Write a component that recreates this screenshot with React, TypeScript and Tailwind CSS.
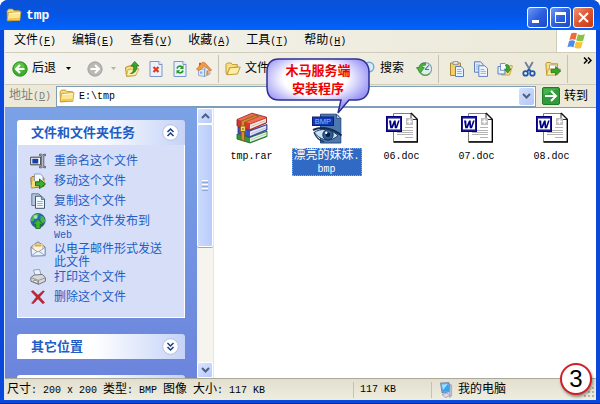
import type { ReactNode } from "react"

const cjk = "font-['Liberation_Sans','Noto_Sans_CJK_SC',sans-serif]"
const mono = "font-['Liberation_Mono','Noto_Sans_CJK_SC',monospace]"

/* Latin runs are set in a half-width mono face next to the full-width glyphs */
function Mixed({ children }: { children: string }) {
  const runs = children.split(/([\x20-\x7e]+)/).filter(Boolean)
  return (
    <>
      {runs.map((run, i) =>
        /^[\x20-\x7e]/.test(run) ? (
          <span key={i} className={`text-[10px] whitespace-pre-wrap ${mono}`}>
            {run}
          </span>
        ) : (
          run
        )
      )}
    </>
  )
}

function Icon({ size = 16, box = 16, children }: { size?: number; box?: number; children: ReactNode }) {
  return (
    <svg width={size} height={size} viewBox={`0 0 ${box} ${box}`} className="block shrink-0" aria-hidden="true">
      {children}
    </svg>
  )
}

const FolderIcon = () => (
  <Icon>
    <path d="M1 4 2.5 2h4L8 3.6h5.5V13l-12 1z" fill="#f7dc7c" stroke="#b98a1c" strokeWidth=".8" />
    <path d="M1.2 13.6 2.4 5.6 15 4.6 13.8 13.4z" fill="#fbe793" stroke="#c79a2c" strokeWidth=".8" />
    <path d="M3.2 6.6 13.8 5.8" stroke="#fffbe0" />
    <path d="M2.4 12.2 13.4 11.8" stroke="#f0bf3e" strokeWidth="1.6" />
  </Icon>
)

const OpenFolderIcon = () => (
  <Icon>
    <path d="M1 3.5 2.2 2h4l1.2 1.6h5V6L4.5 7 2 13.5 1 12z" fill="#f9df80" stroke="#c49a35" />
    <path d="M2 13.8 4.8 6.8 15.2 6 12.4 13z" fill="#fdeea5" stroke="#c49a35" />
  </Icon>
)

const BackIcon = () => (
  <Icon>
    <circle cx="8" cy="8" r="7.5" fill="#3fae2e" />
    <circle cx="7" cy="6" r="5.2" fill="#6fce58" opacity=".6" />
    <circle cx="8" cy="8" r="7.1" fill="none" stroke="#2f8f26" strokeWidth=".9" />
    <path d="M12.5 8H4.5M8 4 4 8l4 4" fill="none" stroke="#fff" strokeWidth="2" />
  </Icon>
)

const ForwardIcon = () => (
  <Icon>
    <circle cx="8" cy="8" r="7.5" fill="#b9b9b5" />
    <circle cx="8" cy="8" r="7" fill="none" stroke="#a5a5a0" />
    <path d="M3.5 8h8M8 4l4 4-4 4" fill="none" stroke="#fff" strokeWidth="2" />
  </Icon>
)

const UpIcon = () => (
  <Icon>
    <path d="M1.5 6.5 5 5l7 .5 2 2-2.5 7-9 .8z" fill="#f8de82" stroke="#b98f2b" />
    <path d="M4 8.5 15 8l-3.5 6.5-9 .5z" fill="#fdf0ad" stroke="#c79f3a" strokeWidth=".7" />
    <path d="M6.5 12.5C9.5 11.5 10 8.5 9.5 5H6.8L10.7.4 15 5h-2.5c.6 4-1.5 7.5-6 7.5z" fill="#35a62a" stroke="#1a701c" strokeWidth=".7" />
  </Icon>
)

const PageBase = () => (
  <>
    <path d="M2 .5h9l3 3v12H2z" fill="#eaf1fc" stroke="#7c95c4" />
    <path d="M11 .5v3h3" fill="#fff" stroke="#7c95c4" />
  </>
)

const StopIcon = () => (
  <Icon>
    <PageBase />
    <path d="m5.5 6 5 5m0-5-5 5" stroke="#e03a20" strokeWidth="2.2" />
  </Icon>
)

const RefreshIcon = () => (
  <Icon>
    <PageBase />
    <path d="M5 7.5C5.5 5 8.5 4.5 10 6.2M11 9.5c-.5 2.6-3.8 3-5.2 1.2" fill="none" stroke="#239a26" strokeWidth="1.7" />
    <path d="M11.5 4v4H7.8zM4.5 13V9.3h3.7z" fill="#239a26" />
  </Icon>
)

const HomeIcon = () => (
  <Icon>
    <path d="M2.5 8.5v6l6 1V8zM8.5 15.5l5.5-2.5V8L9 6z" fill="#dceafd" stroke="#7f9ac8" strokeWidth=".8" />
    <path d="M3 1.8h2v3L3 6z" fill="#c45b2b" />
    <path d="M.4 8.2 6.8 1 9.2 2l6.4 7.2-2 .4L9.2 4.8 3 9.6z" fill="#f59a3f" stroke="#c9702a" strokeWidth=".7" />
    <path d="M10.4 9.8 12.6 9v4.4l-2.2 1z" fill="#d08a42" />
    <path d="M4 10.4h2.4v2.4H4z" fill="#7fb4ee" />
  </Icon>
)

const SearchIcon = () => (
  <Icon>
    <path d="m2 14 5-5" stroke="#9a7c3c" strokeWidth="2.4" />
    <circle cx="9" cy="6" r="4.8" fill="#d3ecfb" stroke="#7aa5cf" strokeWidth="1.4" />
  </Icon>
)

const HistoryIcon = () => (
  <Icon>
    <circle cx="9.2" cy="8" r="6.4" fill="#dceef0" stroke="#8aa5ad" strokeWidth="1.2" />
    <path d="m9 8.5 3.8-4.2M9 8.5h4" stroke="#56707c" strokeWidth="1.1" />
    <path d="M9.5 2.2C6 1.5 3.6 3.6 3 6.6H.4L4.4 12l4-5.4H6c.4-1.8 1.8-2.6 3.5-2.4z" fill="#4cb53a" stroke="#25801f" strokeWidth=".7" />
    <path d="M5 12.2c2 2.6 6 2.8 8.4.6" fill="none" stroke="#5aa04c" strokeWidth="1.2" />
  </Icon>
)

const PasteIcon = () => (
  <Icon>
    <path d="M1.5 2h10v12.5h-10z" fill="#f3d168" stroke="#a98632" />
    <path d="M4 .6h5v3H4z" fill="#dfe4ec" stroke="#82868f" strokeWidth=".8" />
    <path d="M6.5 5.5H12l2.5 2.3v7.7h-8z" fill="#eaf2ff" stroke="#5d7fbc" />
    <path d="M8.2 8.5h4M8.2 10.5h4.6M8.2 12.5h4.6" stroke="#86a8de" strokeWidth=".9" />
  </Icon>
)

const CopyIcon = () => (
  <Icon>
    <path d="M1.5.8h6l2.5 2.4v8H1.5z" fill="#dce9fd" stroke="#5d7fbc" />
    <path d="M3 4h4M3 6h4M3 8h4" stroke="#86a8de" strokeWidth=".8" />
    <path d="M5.8 4.8h6l2.7 2.6v8H5.8z" fill="#f2f7ff" stroke="#5d7fbc" />
    <path d="M7.5 8.4h4M7.5 10.4h5.4M7.5 12.4h5.4" stroke="#86a8de" strokeWidth=".9" />
  </Icon>
)

const MoveIcon = () => (
  <Icon>
    <path d="M5 8h3l6-3.8 1.5.8-3 9L4.5 14z" fill="#fbe089" stroke="#bf9637" strokeWidth=".8" />
    <path d="M1 5.5h5L8 7.4V13H1z" fill="#e9f2ff" stroke="#5d7fbc" />
    <path d="M3.5 2.5H8l1.8 1.8v5h-6.3z" fill="#f5f9ff" stroke="#5d7fbc" strokeWidth=".8" />
    <path d="M9.5 3.5c2.4.3 3.4 1.8 3 4.4h1.5L10.7 12 7.4 8h2c.3-1.8 0-2.8-1.2-3.4z" fill="#3aa82c" stroke="#1c7419" strokeWidth=".6" />
  </Icon>
)

const CutIcon = () => (
  <Icon>
    <path d="m4.2 1 5.4 9.2M11.8 1 6.4 10.2" stroke="#6c7f9c" strokeWidth="1.8" />
    <circle cx="4.6" cy="12.4" r="2.3" fill="none" stroke="#1e55ae" strokeWidth="1.7" />
    <circle cx="11.4" cy="12.4" r="2.3" fill="none" stroke="#1e55ae" strokeWidth="1.7" />
    <path d="m6.3 10.5 1.7-2 1.7 2" fill="none" stroke="#1e55ae" strokeWidth="1.4" />
  </Icon>
)

const SendIcon = () => (
  <Icon>
    <path d="M.8 2.5 2 1.5h3.5l1 1.3h6V12l-10.7 2z" fill="#f8dd7f" stroke="#bf9637" />
    <path d="M4.5 4h6l1.5 1.5V12H4.5z" fill="#fff" stroke="#8c9ec4" strokeWidth=".8" />
    <path d="M1.5 14.2 3.5 8h12l-3 6z" fill="#fdeda4" stroke="#bf9637" strokeWidth=".8" />
    <path d="M6 8.2h4.5V5.6L15.8 10l-5.3 4.3v-2.6H6z" fill="#35a62a" stroke="#1a701c" strokeWidth=".7" />
  </Icon>
)

const GoIcon = () => (
  <Icon size={18} box={18}>
    <rect x=".5" y=".5" width="17" height="17" rx="1.5" fill="#2f9b3a" stroke="#1f7a2a" />
    <path d="M1.5 8V1.5h15z" fill="#5cc05f" opacity=".6" />
    <path d="M3 9h10.5M9 4l5 5-5 5" fill="none" stroke="#fff" strokeWidth="2" />
  </Icon>
)

const RenameIcon = () => (
  <Icon>
    <path d="M.7 4.2h10v7.6H.7z" fill="#fff" stroke="#3a3a3a" />
    <path d="M2.3 5.8h6v4.6h-6z" fill="#1440a8" />
    <path d="M9.5 1.2h2l1.2.9L14 1.2h1.6v1.5h-1.8v10.6h1.8v1.5H14l-1.3-.8-1.2.8h-2v-1.5h1.8V2.7H9.5z" fill="#b8bcc8" stroke="#4b4f5c" strokeWidth=".8" />
  </Icon>
)

const MoveFileIcon = () => (
  <Icon>
    <path d="M.8 5 2 3.6h3.5L7 5h7v8.5L1.5 15z" fill="#e9c25c" stroke="#8e6d25" strokeWidth=".9" />
    <path d="M4.5 1h5.8L13 3.4V10H4.5z" fill="#f4f8ff" stroke="#7c8db0" strokeWidth=".8" />
    <path d="M1.2 14.5 2.6 8l12-.4L13 13.6z" fill="#f9dd7b" />
    <path d="M5.5 8.8h4V6l6 5-6 4.6v-2.8h-4z" fill="#3aae2e" stroke="#155f16" strokeWidth=".9" />
  </Icon>
)

const CopyFileIcon = () => (
  <Icon>
    <path d="M1.8.8h7L11 3v9.5H1.8z" fill="#b7c8de" stroke="#5c6f87" strokeWidth=".9" />
    <path d="M5.5 3.2h6l3 3V15.3h-9z" fill="#f3f9ff" stroke="#41566f" />
    <path d="M11.4 3.4v3h3" fill="#8cc1e8" stroke="#41566f" strokeWidth=".8" />
    <path d="M7.2 8.5h5.5M7.2 10.5h5.5M7.2 12.5h5.5" stroke="#7fb2dc" />
  </Icon>
)

const PublishIcon = () => (
  <Icon>
    <circle cx="8" cy="7.6" r="7.2" fill="#2467c7" stroke="#274a7c" strokeWidth=".7" />
    <path d="M3 2.6C5 1 7.5.7 9 1.4L7 4.5 4.5 5.2 3.5 8 1 8.4C.8 6 1.5 4 3 2.6zM10.5 3 13 3.5c1.6 1.6 2 3.5 2 5l-2.5 2-2-3z" fill="#46b93f" />
    <circle cx="5.6" cy="4" r="2" fill="#d9f7d2" opacity=".7" />
    <path d="M8 6.3 13 11.3h-2.8v4.2H5.8v-4.2H3z" fill="#3fb42d" stroke="#17691a" strokeWidth=".8" />
  </Icon>
)

const MailIcon = () => (
  <Icon>
    <path d="M1 6 8 .8 15 6v8.6L1.5 15z" fill="#d5e3f5" stroke="#6a7c98" />
    <path d="M3 3.4 12.8 3v6L8 11 3 8z" fill="#fdf3d8" stroke="#c5a266" strokeWidth=".6" />
    <path d="M4.5 4.6h7" stroke="#f0a63a" strokeWidth="1.6" />
    <path d="M1.2 6.4 7 10.6h2L15 6.4v8.2l-13.5.3z" fill="#eaf3ff" stroke="#7f93b4" strokeWidth=".8" />
    <path d="m1.5 14.6 5.6-4M14.8 14.4l-5.6-3.8" stroke="#7f93b4" strokeWidth=".8" />
  </Icon>
)

const PrintIcon = () => (
  <Icon>
    <path d="m3.5 1 6-.6 1.8 6.2-6 1z" fill="#e8f2ff" stroke="#7d8fab" strokeWidth=".8" />
    <path d="M.8 8.5 4.4 6l8-.6 3 3.4v3.4L8.6 15.4.8 12.2z" fill="#d7d8d8" stroke="#686a6e" strokeWidth=".9" />
    <path d="m1 8.7 7.5 2.7 6.6-2.5M8.5 11.4v3.8" fill="none" stroke="#8b8d92" strokeWidth=".9" />
    <path d="m4 10.9 4 1.6v2l-4.4-1.6z" fill="#fff" stroke="#6c6e73" strokeWidth=".7" />
  </Icon>
)

const DeleteIcon = () => (
  <Icon>
    <path d="M1.2 2.5 3 1.5l5 4.8L13 1.8l1.4.6L9.6 8l5 5.6-1.8 1.2L8 9.8l-4.6 4.8-1.8-.4L6.4 8z" fill="#c3232f" stroke="#8f1a2c" strokeWidth=".5" />
  </Icon>
)

const ComputerIcon = () => (
  <Icon>
    <path d="M2.5 1 11 .6l1.6 9L4 11z" fill="#8fa4cf" stroke="#5d72a2" strokeWidth=".7" />
    <path d="m3.6 2.2 6.6-.4 1.2 7-6.7 1z" fill="#35a3f0" />
    <path d="m3.8 2.5 6-.4L5 8z" fill="#a6e0ff" />
    <path d="M12 2.4 13.6 3v11l-2 1.4z" fill="#c4cadd" stroke="#7d86a4" strokeWidth=".5" />
    <path d="m4 12.5 5-1.4 3.4 2.4-5 2.2z" fill="#d6daea" stroke="#7d86a4" strokeWidth=".6" />
  </Icon>
)

const RarIcon = () => (
  <Icon size={32} box={32}>
    <path d="m1 22 13 3.5L31 19v5.5L14 31 1 27z" fill="#2c9b35" stroke="#17601f" strokeWidth=".8" />
    <path d="m14 26 16.5-6v3.8L14 30z" fill="#e9f3e4" />
    <path d="M15 27.6 30 22" stroke="#a8b8a4" strokeWidth=".7" />
    <path d="m2 15 12 3.5 17-6V18l-17 7-12-3.5z" fill="#4053c6" stroke="#252f80" strokeWidth=".8" />
    <path d="m14 19.4 16.2-5.8v3.7L14 24z" fill="#e7e9f7" />
    <path d="M15 21.6 29.8 16" stroke="#a5abc9" strokeWidth=".7" />
    <path d="m1 7.5 15-6.3 14.5 4V11L14 18 1 14z" fill="#d4372b" stroke="#842018" strokeWidth=".8" />
    <path d="M1.5 7.6 16 1.8l14 3.7-16 6z" fill="#ee6d57" />
    <path d="M14 12.4 30 6.4v3.8L14 17z" fill="#f8ebe6" />
    <path d="m15 14.4 14.6-5.7" stroke="#c5a8a3" strokeWidth=".7" />
    <path d="m5.2 9 14-5.6 3.4 1L8.5 10.3v18.6l-3.3-1z" fill="#d78d2c" stroke="#855215" strokeWidth=".7" />
    <path d="M4.4 14h5v5.5h-5z" fill="#f7dd60" stroke="#8a5e17" />
    <path d="M6.2 16h1.4v2H6.2z" fill="#9c6c1e" />
  </Icon>
)

const BmpIcon = () => (
  <Icon size={32} box={32}>
    <path d="M9.5 2.2h16l4.3 4.3V31H9.5z" fill="#4d78ae" stroke="#24497f" />
    <path d="M25.5 2.2v4.3h4.3z" fill="#a9c8ea" stroke="#24497f" strokeWidth=".8" />
    <rect x="1.5" y="5" width="21" height="8.5" fill="#1238b4" stroke="#0a1f78" />
    <text x="12" y="12" textAnchor="middle" fontSize="7.5" fontFamily="Liberation Sans" fill="#9dbcf6">BMP</text>
    <path d="M2 18c7-3.5 18-3 28.5 5.5" fill="none" stroke="#142a4c" strokeWidth="2" />
    <path d="M3 20.5c7-4.5 16-4.5 24 3-7 6.5-16 6.2-24-3z" fill="#c9e2f2" stroke="#17345e" />
    <circle cx="17" cy="22.8" r="5.2" fill="#2a5f98" stroke="#13305a" />
    <circle cx="17" cy="22.8" r="2.3" fill="#0c1c38" />
    <circle cx="15.2" cy="20.8" r="1.2" fill="#fff" />
    <path d="M3 20.5c2 5 5 8 10 9.4" fill="none" stroke="#17345e" strokeWidth="1.2" />
  </Icon>
)

const DocIcon = () => (
  <Icon size={32} box={32}>
    <path d="M7.5 1.5H25l6 6v22H7.5z" fill="#fff" stroke="#808080" />
    <path d="M31.5 7.5v22.5H7.5M25 1l6.5 6.5" fill="none" stroke="#000" strokeWidth="1.4" />
    <path d="M25 1.5v6h6z" fill="#fff" stroke="#000" strokeWidth=".8" />
    <path d="M20 6h7v7h-7z" fill="#c0c0c0" />
    <path d="M23.5 7.2v4.6m-2.3-2.3h4.6" stroke="#fff" strokeWidth="1.5" />
    <path d="M19 15.5h8M11 18.5h16M11 20.5h16M11 22.5h16M19 25.5h8" stroke="#b4b4b4" />
    <path d="M0 4h16v16H0z" fill="#000080" />
    <path d="M1.5 5.5h13v13h-13z" fill="none" stroke="#4a4aa8" strokeWidth=".7" strokeDasharray="1 1" />
    <path d="M2 6.5h12v11H2z" fill="#fff" />
    <path d="M3 8.5h2.2l.4 5.4L8 8.5h1.7l.4 5.4 2-5.4h1.6L11 16.2H8.8l-.5-4-1.7 4H4.3z" fill="#000080" />
  </Icon>
)

const WindowsFlag = () => (
  <Icon size={20} box={20}>
    <path d="M4.2 2.5C6.4 1.3 8.2 1.5 10 2.6L8.3 9C6.6 7.9 4.6 7.8 2.4 9z" fill="#ee6a3a" />
    <path d="M11 3.2c2 1.1 4.2 1.1 6.9-.2l-1.7 6.4c-2.5 1.2-4.8 1.3-7-.1z" fill="#86c440" />
    <path d="M2.1 10.1c2.3-1.2 4.2-1 6 .1l-1.7 6.2c-1.8-1.1-3.8-1.3-6-.1z" fill="#4f8be8" />
    <path d="M9 10.6c2.1 1.1 4.4 1 6.9-.2l-1.7 6.3c-2.4 1.2-4.7 1.2-6.8-.1z" fill="#fac236" />
  </Icon>
)

const menus: [string, string][] = [
  ["文件", "F"],
  ["编辑", "E"],
  ["查看", "V"],
  ["收藏", "A"],
  ["工具", "T"],
  ["帮助", "H"],
]

const tasks = [
  { icon: <RenameIcon />, lines: ["重命名这个文件"] },
  { icon: <MoveFileIcon />, lines: ["移动这个文件"] },
  { icon: <CopyFileIcon />, lines: ["复制这个文件"] },
  { icon: <PublishIcon />, lines: ["将这个文件发布到", "Web"] },
  { icon: <MailIcon />, lines: ["以电子邮件形式发送", "此文件"] },
  { icon: <PrintIcon />, lines: ["打印这个文件"] },
  { icon: <DeleteIcon />, lines: ["删除这个文件"] },
]

const files = [
  { icon: <RarIcon />, lines: ["tmp.rar"] },
  { icon: <BmpIcon />, lines: ["漂亮的妹妹.", "bmp"], selected: true },
  { icon: <DocIcon />, lines: ["06.doc"] },
  { icon: <DocIcon />, lines: ["07.doc"] },
  { icon: <DocIcon />, lines: ["08.doc"] },
]

function Accel({ letter }: { letter: string }) {
  return (
    <span className={`text-[10px] ${mono}`}>
      (<u>{letter}</u>)
    </span>
  )
}

function Separator() {
  return <div className="mx-1.5 h-7 w-px shrink-0 bg-[#c5c2b2]" />
}

function ToolButton({ label, children }: { label: string; children: ReactNode }) {
  return (
    <button aria-label={label} className="shrink-0">
      {children}
    </button>
  )
}

function Caret({ faded = false }: { faded?: boolean }) {
  return (
    <svg width="5" height="3" viewBox="0 0 5 3" className="shrink-0" aria-hidden="true">
      <path d="M0 0h5L2.5 3z" fill={faded ? "#b5b3a8" : "#000"} />
    </svg>
  )
}

function CaptionButton({ label, close = false, children }: { label: string; close?: boolean; children: ReactNode }) {
  return (
    <button
      aria-label={label}
      className={`flex size-[21px] items-center justify-center rounded-[3px] border border-white bg-linear-to-br ${
        close ? "from-[#ee9070] via-[#dd5430] to-[#c63a12]" : "from-[#6f98f0] via-[#2c60e0] to-[#1c4bc4]"
      }`}
    >
      <svg width="19" height="19" viewBox="0 0 19 19" fill="none" stroke="#fff" aria-hidden="true">
        {children}
      </svg>
    </button>
  )
}

function PanelHeader({ title, open = false }: { title: string; open?: boolean }) {
  return (
    <button
      aria-expanded={open}
      className="flex h-[25px] w-full shrink-0 items-center justify-between rounded-t-[3px] bg-linear-to-r from-white from-45% to-[#c6d3f7] pr-1.5 pl-3.5 text-[13px] font-bold text-[#215dc6]"
    >
      {title}
      <svg width="17" height="17" viewBox="0 0 17 17" aria-hidden="true">
        <circle cx="8.5" cy="8.5" r="7.8" fill="#fff" stroke="#b5bfe0" />
        <path
          d={open ? "m5.5 8 3-3 3 3m-6 4 3-3 3 3" : "m5.5 5 3 3 3-3m-6 4 3 3 3-3"}
          fill="none"
          stroke="#1c3b80"
          strokeWidth="1.5"
        />
      </svg>
    </button>
  )
}

function ScrollButton({ label, d }: { label: string; d: string }) {
  return (
    <button
      aria-label={label}
      className="flex h-4 w-full shrink-0 items-center justify-center rounded-xs border border-white bg-linear-to-br from-[#dbe5fd] to-[#b5cafa]"
    >
      <svg width="9" height="6" viewBox="0 0 9 6" fill="none" stroke="#4d6185" strokeWidth="2" aria-hidden="true">
        <path d={d} />
      </svg>
    </button>
  )
}

function Callout() {
  return (
    <div className="absolute top-[58px] left-[266px] z-10 h-14 w-[104px]">
      <svg viewBox="0 0 104 56" className="absolute inset-0 size-full" aria-hidden="true">
        <defs>
          <radialGradient id="bubble" cx=".47" cy=".36" r=".56">
            <stop offset=".55" stopColor="#fff" />
            <stop offset="1" stopColor="#9c97f6" />
          </radialGradient>
        </defs>
        <path
          d="M13 1h77c8 0 13 5 13 13v15c0 8-5 13-13 13H83L72 55l3-13H13C5 42 1 37 1 29V14C1 6 5 1 13 1z"
          fill="url(#bubble)"
          stroke="#2b2f92"
          strokeWidth="1.5"
        />
      </svg>
      <p className="relative pt-1 text-center text-[13px] leading-[18px] font-bold text-[#f00000]">
        木马服务端
        <br />
        安装程序
      </p>
    </div>
  )
}

export default function App() {
  return (
    <div className={`relative flex h-screen flex-col overflow-hidden rounded-t-lg border-b border-[#0a2a9c] bg-[#0a48dc] text-[12px] leading-[13px] text-black ${cjk}`}>
      <header className="flex h-[30px] shrink-0 items-center bg-linear-to-b from-[#0a52d8] via-[#0455e6] to-[#0264fb] px-1.5">
        <FolderIcon />
        <h1 className={`ml-1 text-[13px] font-bold text-white ${mono}`}>tmp</h1>
        <div className="ml-auto flex gap-0.5 pt-1">
          <CaptionButton label="最小化">
            <path d="M4 13.5h7" strokeWidth="3" />
          </CaptionButton>
          <CaptionButton label="最大化">
            <path d="M4.5 5.5h10v9h-10z" />
            <path d="M4 5.5h11" strokeWidth="3" />
          </CaptionButton>
          <CaptionButton label="关闭" close>
            <path d="m5 5 9 9m0-9-9 9" strokeWidth="2" />
          </CaptionButton>
        </div>
      </header>

      <main className="mx-1 mb-[3px] flex min-h-0 flex-1 flex-col border-l border-[#dfe8fb] bg-[#ece9d8]">
        <nav className="flex h-[23px] shrink-0 border-b border-[#cfccba] bg-linear-to-r from-[#f4f3ee] to-[#ece9d8] pl-px">
          {menus.map(([name, key]) => (
            <button key={key} className="px-2 whitespace-nowrap">
              {name}
              <Accel letter={key} />
            </button>
          ))}
          <div className="ml-auto flex w-10 items-center justify-center border-l border-[#cfccba] bg-white">
            <WindowsFlag />
          </div>
        </nav>

        <div className="flex h-8 shrink-0 items-center border-b border-[#cfccba] bg-linear-to-r from-[#f4f3ee] to-[#ece9d8] pr-1 pl-[7px] whitespace-nowrap">
          <button className="flex items-center gap-1">
            <BackIcon />
            后退
          </button>
          <div className="ml-2.5 flex items-center gap-4">
            <Caret />
            <ToolButton label="前进"><ForwardIcon /></ToolButton>
          </div>
          <div className="ml-2 flex items-center gap-2">
            <Caret faded />
            <ToolButton label="向上"><UpIcon /></ToolButton>
            <ToolButton label="停止"><StopIcon /></ToolButton>
            <ToolButton label="刷新"><RefreshIcon /></ToolButton>
            <ToolButton label="主页"><HomeIcon /></ToolButton>
          </div>
          <Separator />
          <button className="flex w-[135px] shrink-0 items-center gap-1">
            <OpenFolderIcon />
            文件夹
          </button>
          <div className="flex items-center gap-3">
            <button className="flex items-center gap-1">
              <SearchIcon />
              搜索
            </button>
            <ToolButton label="历史"><HistoryIcon /></ToolButton>
          </div>
          <Separator />
          <div className="ml-1 flex items-center gap-2">
            <ToolButton label="粘贴"><PasteIcon /></ToolButton>
            <ToolButton label="复制"><CopyIcon /></ToolButton>
            <ToolButton label="移动到"><MoveIcon /></ToolButton>
            <ToolButton label="剪切"><CutIcon /></ToolButton>
            <ToolButton label="复制到"><SendIcon /></ToolButton>
          </div>
          <Separator />
          <button aria-label="更多按钮" className="mt-1 ml-auto self-start">
            <svg width="9" height="7" viewBox="0 0 9 7" fill="none" stroke="#000" strokeWidth="1.5" aria-hidden="true">
              <path d="m1 .5 3 3-3 3m4-6 3 3-3 3" />
            </svg>
          </button>
        </div>

        <div className="flex h-[23px] shrink-0 items-center border-b border-[#7f9db9] pl-1">
          <label htmlFor="address" className="w-[47px] shrink-0 whitespace-nowrap text-[#808080]">
            地址
            <Accel letter="D" />
          </label>
          <div className="flex h-[21px] min-w-0 flex-1 items-center gap-1 border border-[#7f9db9] bg-white pl-0.5">
            <FolderIcon />
            <input id="address" defaultValue="E:\tmp" className={`min-w-0 flex-1 text-[10px] outline-none ${mono}`} />
            <button
              aria-label="展开地址列表"
              className="mr-px flex h-[17px] w-[15px] shrink-0 items-center justify-center rounded-xs bg-linear-to-br from-[#d5e0fc] to-[#b2c6f6]"
            >
              <svg width="9" height="6" viewBox="0 0 9 6" fill="none" stroke="#4d6185" strokeWidth="2" aria-hidden="true">
                <path d="m1 1 3.5 3.5L8 1" />
              </svg>
            </button>
          </div>
          <button className="flex shrink-0 items-center gap-1 pr-2 pl-1.5 whitespace-nowrap">
            <GoIcon />
            转到
          </button>
        </div>

        <div className="flex min-h-0 flex-1 bg-white">
          <aside className="flex w-48 shrink-0 flex-col gap-4 overflow-hidden bg-linear-to-b from-[#7ba2e7] to-[#6b85dc] px-3 pt-3">
            <section className="shrink-0">
              <PanelHeader title="文件和文件夹任务" open />
              <ul className="flex flex-col gap-1 border border-t-0 border-white bg-[#d6dff7] px-3 pt-2 pb-3">
                {tasks.map((task) => (
                  <li key={task.lines[0]}>
                    <a href="#" className="flex items-start gap-2 text-[#215dc6]">
                      {task.icon}
                      <span className="-mb-1 pt-0.5 whitespace-nowrap">
                        {task.lines.map((line) => (
                          <span key={line} className="block h-[13px]">
                            <Mixed>{line}</Mixed>
                          </span>
                        ))}
                      </span>
                    </a>
                  </li>
                ))}
              </ul>
            </section>
            <PanelHeader title="其它位置" />
            <PanelHeader title="" />
          </aside>

          <div className="flex w-[17px] shrink-0 flex-col border-r border-[#e8e6de] bg-[#f5f4ef]">
            <ScrollButton label="向上滚动" d="m1 5 3.5-3.5L8 5" />
            <div className="flex h-[123px] flex-col items-center justify-center gap-px rounded-xs border border-white bg-linear-to-r from-[#cbd9fd] to-[#b9ccfa] shadow-[0_1px_0_#8fa9de]">
              <i className="h-px w-1.5 bg-white" />
              <i className="h-px w-1.5 bg-[#8ea7dc]" />
              <i className="h-px w-1.5 bg-white" />
              <i className="h-px w-1.5 bg-[#8ea7dc]" />
              <i className="h-px w-1.5 bg-white" />
              <i className="h-px w-1.5 bg-[#8ea7dc]" />
            </div>
            <div className="flex-1" />
            <ScrollButton label="向下滚动" d="M1 1l3.5 3.5L8 1" />
          </div>

          <ul className="flex min-w-0 flex-1 flex-wrap content-start pt-1">
            {files.map((file) => (
              <li key={file.lines[0]} className="w-[75px]">
                <button className="flex w-full flex-col items-center gap-1">
                  {file.icon}
                  <span
                    className={
                      file.selected
                        ? "w-[70px] border border-dotted border-[#d9a05a] bg-[#316ac5] text-white"
                        : "w-[70px] border border-transparent"
                    }
                  >
                    {file.lines.map((line) => (
                      <span key={line} className="block h-[13px]">
                        <Mixed>{line}</Mixed>
                      </span>
                    ))}
                  </span>
                </button>
              </li>
            ))}
          </ul>
        </div>

        <footer className="flex h-[22px] shrink-0 items-center border-t border-[#aca899] bg-linear-to-b from-[#e2dfcf] to-[#efedde] whitespace-nowrap">
          <p className="min-w-0 flex-1 pl-0.5">
            <Mixed>尺寸: 200 x 200 类型: BMP 图像 大小: 117 KB</Mixed>
          </p>
          <p className="flex h-4 w-[78px] items-center border-l border-[#c5c2b2] pl-1.5">
            <Mixed>117 KB</Mixed>
          </p>
          <p className="flex h-4 w-[165px] items-center gap-1 border-l border-[#c5c2b2] pl-1.5">
            <ComputerIcon />
            我的电脑
          </p>
        </footer>
      </main>

      <Callout />

      <svg width="14" height="14" viewBox="0 0 14 14" className="absolute right-1 bottom-1" fill="#b8b4a0" aria-hidden="true">
        <path d="M10 2h2v2h-2zM6 6h2v2H6zM10 6h2v2h-2zM2 10h2v2H2zM6 10h2v2H6zM10 10h2v2h-2z" />
      </svg>
      <div className="absolute right-2 bottom-2 flex size-8 items-center justify-center rounded-full border-2 border-[#cf2027] bg-white font-['Liberation_Sans',sans-serif] text-[24px] leading-none shadow-[1px_2px_3px_#0006]">
        3
      </div>
    </div>
  )
}
